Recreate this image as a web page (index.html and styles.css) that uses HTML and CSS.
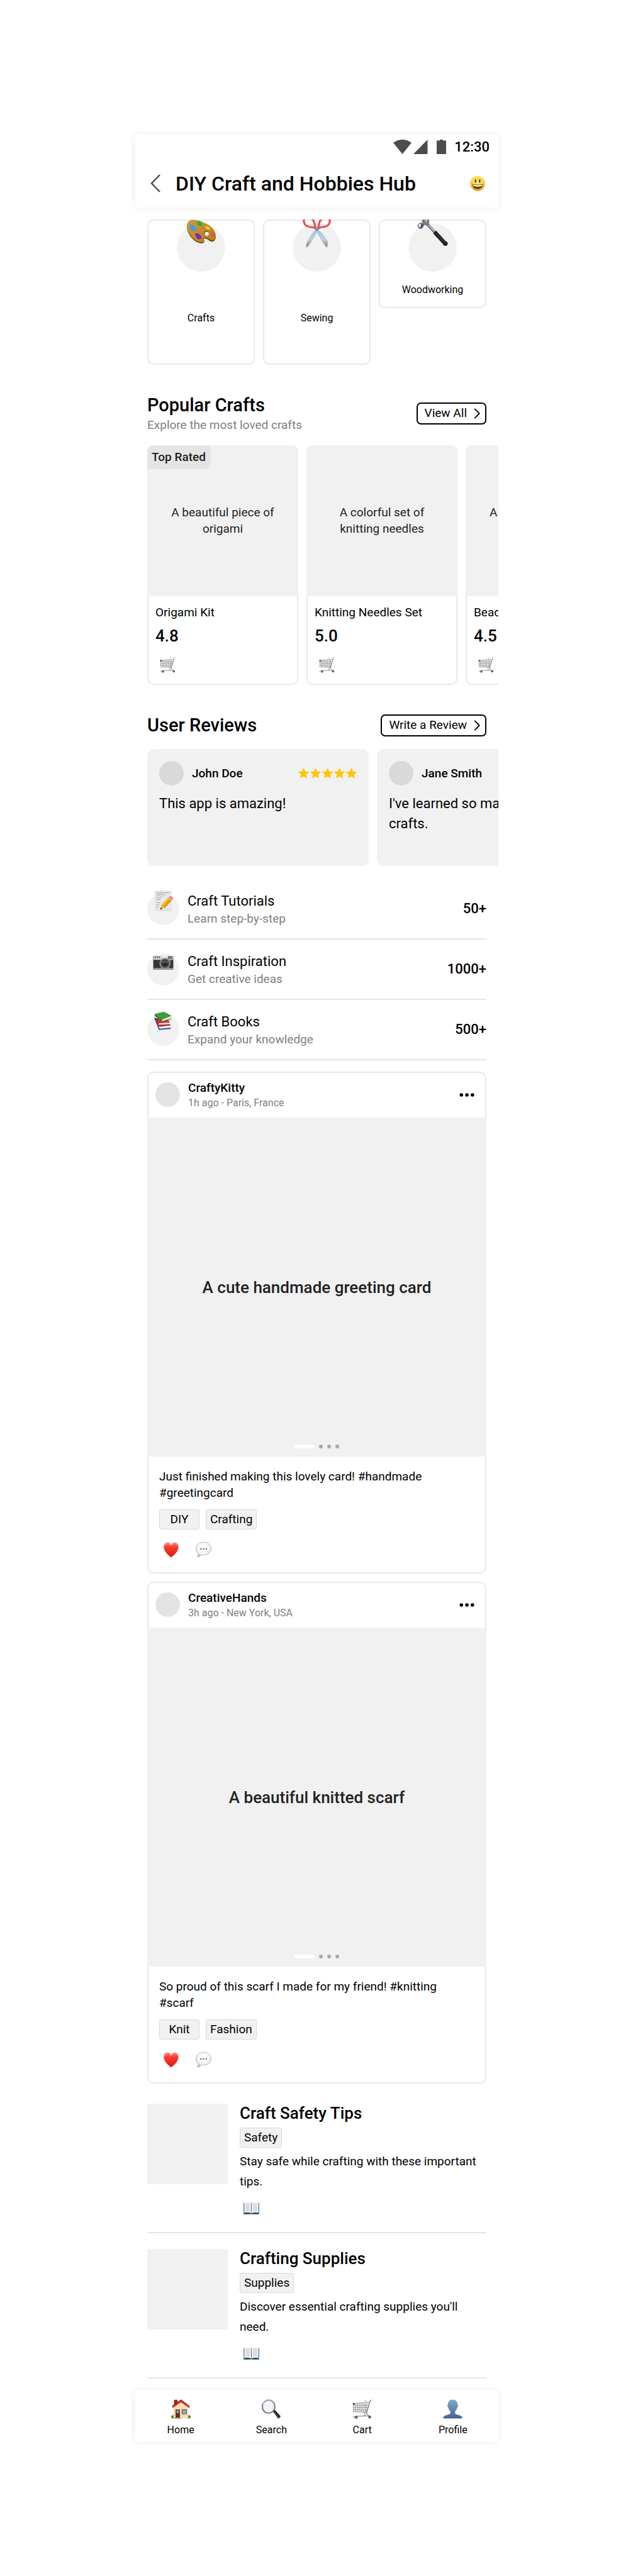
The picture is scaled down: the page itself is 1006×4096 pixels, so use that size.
FILE: index.html
```html
<!DOCTYPE html>
<html lang="en">
<head>
<meta charset="utf-8">
<meta name="viewport" content="width=device-width, initial-scale=1">
<title>DIY Craft and Hobbies Hub</title>
<link rel="stylesheet" href="styles.css">
</head>
<body>
<svg class="sprite" aria-hidden="true">
  <defs>
    <linearGradient id="steel" x1="0" y1="0" x2="0" y2="1"><stop offset="0" stop-color="#9cc4ea"/><stop offset=".55" stop-color="#c3cfdc"/><stop offset="1" stop-color="#8d7f80"/></linearGradient>
    <linearGradient id="person" x1="0" y1="0" x2="0" y2="1"><stop offset="0" stop-color="#80abcd"/><stop offset="1" stop-color="#43648f"/></linearGradient>
    <linearGradient id="red" x1="0" y1="0" x2="0" y2="1"><stop offset="0" stop-color="#ff6a5e"/><stop offset=".35" stop-color="#fb382c"/><stop offset="1" stop-color="#d81a10"/></linearGradient>
    <linearGradient id="wood" x1="0" y1="0" x2="1" y2="1"><stop offset="0" stop-color="#cf9540"/><stop offset="1" stop-color="#b97b22"/></linearGradient>
    <radialGradient id="face" cx=".5" cy=".4" r=".6"><stop offset="0" stop-color="#fff07a"/><stop offset=".65" stop-color="#ffd23c"/><stop offset="1" stop-color="#f09a15"/></radialGradient>
    <radialGradient id="bubble" cx=".5" cy=".4" r=".6"><stop offset="0" stop-color="#fff"/><stop offset=".7" stop-color="#f3f3f3"/><stop offset="1" stop-color="#b4b4b4"/></radialGradient>
  </defs>
  <symbol id="i-chevron" viewBox="0 0 10 18"><path d="M1 1l8 8-8 8" fill="none" stroke="currentColor" stroke-width="2"/></symbol>
  <symbol id="i-star" viewBox="0 0 24 24"><path d="M12 1.500l3.200 7 7.600.8-5.700 5.200 1.600 7.500-6.700-3.700L5.300 22l1.600-7.500L1.200 9.300l7.600-.8z" fill="#ffc700" stroke="#ffc700" stroke-width="1.500" stroke-linejoin="round"/></symbol>
  <symbol id="i-more" viewBox="0 0 24 6"><g fill="#000"><circle cx="3.200" cy="3" r="2.800"/><circle cx="12" cy="3" r="2.800"/><circle cx="20.800" cy="3" r="2.800"/></g></symbol>
  <symbol id="i-cart" viewBox="0 0 40 40">
    <g fill="none" stroke="#777" stroke-width="1">
      <path d="M39 1l-3 3-7 25" stroke="#666" stroke-width="1.400"/>
      <path d="M2 9l33-3M2 13l32-1M2 17.500l30.500-1M2 21.500l29 .5M2 25.500l28.500 1M26 1v4"/>
      <path d="M2 8v18M6 8.500v17.500M10 8v18M14 7.800v18M18 7.500v18.500M22 7.200v19M26 7v19.500M30 6.500L28 26"/>
      <path d="M23 27q5 3 2 8M1 37l4-2 29-1q-5-4-6-7" stroke-width="1.300"/>
    </g>
    <path d="M1 8h4v3H1z" fill="#1d3d58"/>
    <circle cx="8" cy="37" r="3" fill="#5b5152"/><circle cx="35.500" cy="36.500" r="3" fill="#5b5152"/>
    <circle cx="8" cy="37" r="1" fill="#b5aaaa"/><circle cx="35.500" cy="36.500" r="1" fill="#b5aaaa"/>
  </symbol>
  <symbol id="i-heart" viewBox="0 0 30 31"><path d="M15 30.500C10 26 .5 19 .5 9.500C.5 4 4 .8 8 .8c3.500 0 6 2 7 5.200C16 2.800 18.500.8 22 .8c4 0 7.500 3.200 7.500 8.700C29.500 19 20 26 15 30.500z" fill="url(#red)"/><path d="M3 7q1-4 5-4t6 4" fill="none" stroke="#ff9f96" stroke-width="1.500"/><path d="M17 7q1-4 5-4t5 3" fill="none" stroke="#ff9f96" stroke-width="1.500"/></symbol>
  <symbol id="i-bubble" viewBox="0 0 32 32"><path d="M16 .8c9 0 15.300 5.600 15.300 13.200S25 27 16 27c-1.500 0-3-.2-4.500-.5C9.500 29.500 6.500 31 3 31c1.500-1.500 2.500-4 2.300-6.800C2.400 21.700.7 18.200.7 14C.7 6.400 7 .8 16 .8z" fill="url(#bubble)" stroke="#a8a8a8" stroke-width=".9"/><g fill="#555"><circle cx="10.500" cy="14.500" r="1.500"/><circle cx="16" cy="14.500" r="1.500"/><circle cx="21.500" cy="14.500" r="1.500"/></g></symbol>
  <symbol id="i-book" viewBox="0 0 30 24"><path d="M0 2h30v22H18l-3-1-3 1H0z" fill="#3c84ad"/><path d="M1.500 1Q9-.5 15 1.500Q21-.5 28.500 1v20.500Q21 20 15 22.500Q9 20 1.500 21.500z" fill="#f0f0f4"/><path d="M1.500 21Q9 19 15 22q6-3 13.500-1v2H1.500z" fill="#3c4650"/><path d="M15 1.500v21" stroke="#777" stroke-width="1.200"/><path d="M4 4.500h8M4 7.500h8M4 10.500h8M4 13.500h8M4 16.500h8M18 4.500h8M18 7.500h8M18 10.500h8M18 13.500h8M18 16.500h8" stroke="#b3b3ba" stroke-width="1"/></symbol>
</svg>

<div class="phone">
  <header class="top">
    <div class="status">
      <svg class="status-icons" viewBox="0 0 84 23" aria-hidden="true"><g fill="#4d4d4d"><path d="M0 5Q14.500-5 29 5L14.500 23z"/><path d="M32 23L54.500 0v23z"/><path d="M69 1.500h5V0h5v1.500h5V23H69z"/></g></svg>
      <span>12:30</span>
    </div>
    <div class="appbar">
      <button class="back" aria-label="Back"><svg viewBox="0 0 16 29"><path d="M15 1L2 14.500 15 28" fill="none" stroke="#4d4d4d" stroke-width="2.500"/></svg></button>
      <h1>DIY Craft and Hobbies Hub</h1>
      <svg class="face" viewBox="0 0 30 30" aria-hidden="true"><circle cx="15" cy="15" r="14.700" fill="url(#face)"/><g fill="#6b4410"><ellipse cx="11" cy="9.800" rx="1.800" ry="3.600"/><ellipse cx="19" cy="9.800" rx="1.800" ry="3.600"/><path d="M4.500 15.500Q15 18.500 25.500 15.500Q25 26 15 26T4.500 15.500z"/></g><path d="M6 17q9 2.500 18 0l-.8 2.800q-8.200 2-16.400 0z" fill="#fff"/></svg>
    </div>
  </header>

  <main>
    <section class="categories">
      <a class="category" href="#crafts">
        <svg viewBox="0 -8 96 104" aria-hidden="true"><circle cx="48" cy="48" r="48" fill="#f1f1f1"/>
          <path d="M29-6C40-8 64 2 73 14C79 23 79 33 72 36C66 38 60 29 55 30C51 32 58 37 52 39C43 42 27 31 22 17C18 6 20-4 29-6z" fill="#75460f"/>
          <path d="M29-7C40-9 64 0 73 12C79 21 79 31 72 33C66 35 60 26 55 28C50 30 58 35 52 37C43 40 27 29 22 15C18 4 20-5 29-7z" fill="url(#wood)"/>
          <circle cx="59" cy="19.500" r="4.800" fill="#7a4b12"/><circle cx="59.500" cy="20.500" r="4" fill="#f1f1f1"/>
          <path d="M26 3q3-3 7 1t6 7-3 4-8-4-2-8z" fill="#36a3dc"/><path d="M40-4q5-2 8 1t2 6-6 1-4-7z" fill="#26b826"/><path d="M56 5q4-1 8 2t1 5-6-1-3-6z" fill="#f4c919"/><path d="M68 18q4 0 7 5t0 5-5-3-2-7z" fill="#ef4c3c"/><path d="M36 20q4-2 8 1t5 6-3 4-6-1-4-10z" fill="#7d2bb4"/>
        </svg>
        <span>Crafts</span>
      </a>
      <a class="category" href="#sewing">
        <svg viewBox="0 -8 96 104" aria-hidden="true"><circle cx="48" cy="48" r="48" fill="#f1f1f1"/>
          <path d="M50 11C59 20 68 30 70 37Q70 45 68 48C61 40 52 26 47 15z" fill="url(#steel)"/>
          <path d="M46 11C37 20 29 34 27 41Q26 46 28 48C36 40 44 26 50 15z" fill="url(#steel)"/>
          <g fill="none" stroke="#e84f56" stroke-width="4"><path d="M46 10Q44 5 43.500 1Q41-12 30-12Q22-11 22-5Q23 6 35 7Q41 7 46 10z"/><path d="M50 10Q52 5 52.500 1Q55-12 66-12Q74-11 74-5Q73 6 61 7Q55 7 50 10z"/></g>
          <circle cx="48.500" cy="11.500" r="3.400" fill="#72859a"/><path d="M46 9l5 5" stroke="#d7e2ec" stroke-width="1"/>
        </svg>
        <span>Sewing</span>
      </a>
      <a class="category short" href="#woodworking">
        <svg viewBox="0 -8 96 104" aria-hidden="true"><circle cx="48" cy="48" r="48" fill="#f1f1f1"/>
          <path d="M39 3l14 15" stroke="#64686f" stroke-width="5.500"/><path d="M40 3l12 13" stroke="#c6d0de" stroke-width="2"/>
          <path d="M52 17l22 24" stroke="#1e1f20" stroke-width="8"/><circle cx="73.500" cy="40" r="4.600" fill="#1e1f20"/><path d="M55 19l18 20" stroke="#444" stroke-width="1.500"/>
          <path d="M27-12L40-12Q42-4 41 3Q37 6 33 3L29 3Q26-2 27-12z" fill="#777c82"/><path d="M30-12h6q2 5 1 11l-4-3z" fill="#a9aeb5"/>
          <path d="M19 1L25-2 31 3 28 9 23 11 18 6z" fill="#4f555c"/><path d="M20 1l5-1-1 8-4-2z" fill="#e6edf4"/>
        </svg>
        <span>Woodworking</span>
      </a>
    </section>

    <section class="block">
      <div class="block-head">
        <div><h2>Popular Crafts</h2><p class="muted">Explore the most loved crafts</p></div>
        <button class="outlined">View All <svg><use href="#i-chevron"/></svg></button>
      </div>
      <div class="scroller">
        <article class="product">
          <div class="product-picture"><span class="ribbon">Top Rated</span><p>A beautiful piece of origami</p></div>
          <div class="product-body"><h3>Origami Kit</h3><strong>4.8</strong><button aria-label="Add to cart"><svg><use href="#i-cart"/></svg></button></div>
        </article>
        <article class="product">
          <div class="product-picture"><p>A colorful set of knitting needles</p></div>
          <div class="product-body"><h3>Knitting Needles Set</h3><strong>5.0</strong><button aria-label="Add to cart"><svg><use href="#i-cart"/></svg></button></div>
        </article>
        <article class="product">
          <div class="product-picture"><p>A variety of colorful beads</p></div>
          <div class="product-body"><h3>Beading Kit</h3><strong>4.5</strong><button aria-label="Add to cart"><svg><use href="#i-cart"/></svg></button></div>
        </article>
      </div>
    </section>

    <section class="block">
      <div class="block-head">
        <h2>User Reviews</h2>
        <button class="outlined">Write a Review <svg><use href="#i-chevron"/></svg></button>
      </div>
      <div class="scroller">
        <article class="review">
          <div class="review-head"><span class="avatar"></span><h3>John Doe</h3>
            <span class="stars" role="img" aria-label="5 stars"><svg><use href="#i-star"/></svg><svg><use href="#i-star"/></svg><svg><use href="#i-star"/></svg><svg><use href="#i-star"/></svg><svg><use href="#i-star"/></svg></span></div>
          <p>This app is amazing!</p>
        </article>
        <article class="review">
          <div class="review-head"><span class="avatar"></span><h3>Jane Smith</h3>
            <span class="stars" role="img" aria-label="5 stars"><svg><use href="#i-star"/></svg><svg><use href="#i-star"/></svg><svg><use href="#i-star"/></svg><svg><use href="#i-star"/></svg><svg><use href="#i-star"/></svg></span></div>
          <p>I've learned so many amazing crafts.</p>
        </article>
      </div>
    </section>

    <ul class="links">
      <li>
        <svg viewBox="0 0 64 64" aria-hidden="true"><circle cx="32" cy="32" r="32" fill="#f1f1f1"/><path d="M15-5h34v40H15z" fill="#e7e7e7"/><path d="M15 34.500h34" stroke="#cfcfcf"/><path d="M18 0q2-2 4 0t4 0 4-1 4 1 4-1 6 1M18 4q2-2 4 0t3 0 4-1 5 1M18 9q2-2 4 0t4 0 4-1M18 13q2-1 4 0t4 0M18 19q2-2 4 0t4 0M18 24q2-2 4 0t2 0M18 29q2-2 4 0" fill="none" stroke="#8c8c8c"/><path d="M26 33l2-9L42 9l7 6-14 15z" fill="#f5b919"/><path d="M31 28L45 12l3 3-14 15z" fill="#e39a12"/><path d="M26 33l2-9 7 6z" fill="#e8bd87"/><path d="M26 33l1-4 3 2z" fill="#222"/><path d="M42 9l2-2 7 6-2 2z" fill="#b9bec3"/><path d="M43.500 7.500Q47 5 50 8t0 5.500z" fill="#ef7f88"/></svg>
        <div><h3>Craft Tutorials</h3><p class="muted">Learn step-by-step</p></div><strong>50+</strong>
      </li>
      <li>
        <svg viewBox="0 0 64 64" aria-hidden="true"><circle cx="32" cy="32" r="32" fill="#f1f1f1"/><path d="M12 5h40v27H12z" fill="#333436"/><path d="M13 5h38l1 8H12z" fill="#c9cbcc"/><path d="M16 6v3M20 6v3M24 6v3" stroke="#555" stroke-width="2"/><path d="M29 5.500h10v3H29z" fill="#f3f2d6"/><path d="M42 6h7v5h-7z" fill="#887e78" stroke="#555"/><path d="M12 29h40v3H12z" fill="#8f9193"/><circle cx="35.500" cy="20" r="11" fill="#9b9da0"/><circle cx="35.500" cy="20" r="9.300" fill="#57595c"/><circle cx="35.500" cy="20" r="6.500" fill="#2a2b2d"/><path d="M30 19q5-5 11 0" stroke="#85888c" fill="none" stroke-width="1.500"/><path d="M44.500 12h3v2h-3z" fill="#ffc928"/></svg>
        <div><h3>Craft Inspiration</h3><p class="muted">Get creative ideas</p></div><strong>1000+</strong>
      </li>
      <li>
        <svg viewBox="0 0 64 64" aria-hidden="true"><circle cx="32" cy="32" r="32" fill="#f1f1f1"/>
          <path d="M15 8L40 14 47 23 24 26z" fill="#2f55ae"/><path d="M24 26l23-2v5l-21 2z" fill="#ebe8e4"/><path d="M15 8l9 23 23-2" fill="none" stroke="#27479c" stroke-width="2.200"/>
          <path d="M19 9L40 10 45 17 23 20z" fill="#e52d22"/><path d="M22 18l23-2v6l-22 1z" fill="#f2efeb"/><path d="M19 9l3 14 23-1" fill="none" stroke="#c81c14" stroke-width="2.400"/><path d="M22 17.500l22-1.500" stroke="#e52d22" stroke-width="3"/>
          <path d="M15 0L33-4 49 4 29 12z" fill="#3f9d3b"/><path d="M29 12l20-8-1 6-18 6z" fill="#eceae6"/><path d="M15 0v4l14 12q-2-2 0-4z" fill="#2b7a2b"/><path d="M29 15.500l19-5.500" stroke="#2b7a2b" stroke-width="1.500"/></svg>
        <div><h3>Craft Books</h3><p class="muted">Expand your knowledge</p></div><strong>500+</strong>
      </li>
    </ul>

    <section class="posts">
      <article class="post">
        <div class="post-head"><span class="avatar"></span><div><h3>CraftyKitty</h3><p class="meta">1h ago - Paris, France</p></div><button aria-label="More"><svg><use href="#i-more"/></svg></button></div>
        <div class="post-picture"><p>A cute handmade greeting card</p><div class="pager"><i class="on"></i><i></i><i></i><i></i></div></div>
        <div class="post-body">
          <p>Just finished making this lovely card! #handmade #greetingcard</p>
          <div class="tags"><span class="tag">DIY</span><span class="tag">Crafting</span></div>
          <div class="actions"><button aria-label="Like"><svg class="heart"><use href="#i-heart"/></svg></button><button aria-label="Comment"><svg><use href="#i-bubble"/></svg></button></div>
        </div>
      </article>
      <article class="post">
        <div class="post-head"><span class="avatar"></span><div><h3>CreativeHands</h3><p class="meta">3h ago - New York, USA</p></div><button aria-label="More"><svg><use href="#i-more"/></svg></button></div>
        <div class="post-picture"><p>A beautiful knitted scarf</p><div class="pager"><i class="on"></i><i></i><i></i><i></i></div></div>
        <div class="post-body">
          <p>So proud of this scarf I made for my friend! #knitting #scarf</p>
          <div class="tags"><span class="tag">Knit</span><span class="tag">Fashion</span></div>
          <div class="actions"><button aria-label="Like"><svg class="heart"><use href="#i-heart"/></svg></button><button aria-label="Comment"><svg><use href="#i-bubble"/></svg></button></div>
        </div>
      </article>
    </section>

    <section class="guides">
      <article class="guide">
        <div class="thumb"></div>
        <div class="guide-body"><h2>Craft Safety Tips</h2><span class="tag">Safety</span><p>Stay safe while crafting with these important tips.</p><button aria-label="Read"><svg><use href="#i-book"/></svg></button></div>
      </article>
      <article class="guide">
        <div class="thumb"></div>
        <div class="guide-body"><h2>Crafting Supplies</h2><span class="tag">Supplies</span><p>Discover essential crafting supplies you'll need.</p><button aria-label="Read"><svg><use href="#i-book"/></svg></button></div>
      </article>
    </section>
  </main>

  <nav class="tabs">
    <a href="#home"><svg viewBox="0 0 40 40" aria-hidden="true"><ellipse cx="4" cy="36" rx="4" ry="3.500" fill="#4a8a22"/><ellipse cx="36" cy="36" rx="4" ry="3.500" fill="#4a8a22"/><path d="M6 1h7v14H6z" fill="#a52019"/><path d="M5 16L20 4l15 12v23H5z" fill="#f6dfb6"/><path d="M5 24h30M5 28h30M5 20h30M5 33h30" stroke="#e8cc9c" stroke-width=".7"/><path d="M20 1l18 14-1 3L20 6 3 18l-1-3z" fill="#d92c20"/><path d="M2 14L20 1l18 13" fill="none" stroke="#333" stroke-width="1.200"/><path d="M9 21h9v18H9z" fill="#6c2f18"/><path d="M11 23h5v5h-5z" fill="#6db3e2"/><path d="M22.500 21.500h9v8.500h-9z" fill="#6db3e2" stroke="#8b5a35" stroke-width="1.400"/><path d="M7 37.500h13V40H7z" fill="#a99a8b"/></svg><span>Home</span></a>
    <a href="#search"><svg viewBox="0 0 40 40" aria-hidden="true"><path d="M23 25l4-3 12 13-5 5z" fill="#202528"/><path d="M26 27l9 10" stroke="#66717a" stroke-width="1.200"/><ellipse cx="14" cy="15" rx="13" ry="13.500" fill="#f4f4f4" stroke="#5d646b" stroke-width="2"/><ellipse cx="14" cy="15" rx="11.500" ry="12" fill="none" stroke="#c0c6cc"/><path d="M2 9Q6 1 14 1t11 6" fill="none" stroke="#a8c4e2" stroke-width="2"/></svg><span>Search</span></a>
    <a href="#cart"><svg><use href="#i-cart"/></svg><span>Cart</span></a>
    <a href="#profile"><svg viewBox="0 0 40 40" aria-hidden="true"><path d="M20 .5c6 0 10 4.500 10 10q1.500 2 .8 4t-1.600 2.500q-1 5-4.200 7.500v5Q26 31 33 32.500T39.500 39.500H.5Q0 34 7 32.500T15 29.500v-5q-3.200-2.500-4.200-7.500Q10 16.500 9.200 14.500t.8-4c0-5.500 4-10 10-10z" fill="url(#person)"/></svg><span>Profile</span></a>
  </nav>
</div>
</body>
</html>
```
FILE: styles.css
```css
* { box-sizing: border-box; margin: 0; padding: 0; }
body {
  padding: 214px 214px 214px 215px;
  background: #fff;
  color: #000;
  font: 400 19px/26px Roboto, "Liberation Sans", sans-serif;
}
button { border: 0; background: none; font: inherit; color: inherit; display: flex; align-items: center; cursor: pointer; }
a { color: inherit; text-decoration: none; }
h1, h2, h3, strong { font-weight: 500; }
ul { list-style: none; }
svg { display: block; flex: none; }
.sprite { position: absolute; width: 0; height: 0; }
.muted { color: #808080; }

.top { height: 116px; box-shadow: 0 0 14px rgba(0, 0, 0, .08); background: #fff; }
.status { display: flex; justify-content: flex-end; align-items: center; gap: 13px; height: 39px; padding-right: 14px; font-size: 22px; font-weight: 500; }
.status-icons { width: 84px; height: 23px; }
.appbar { display: flex; align-items: center; height: 77px; padding: 0 21px 0 24px; }
.back svg { width: 16px; height: 29px; }
h1 { flex: 1; margin-left: 24px; font-size: 32px; line-height: 38px; }
.face { width: 24px; height: 24px; }

main { padding: 19px; }
.categories { display: grid; grid-template-columns: repeat(3, 1fr); gap: 13px; align-items: start; }
.category { display: flex; flex-direction: column; align-items: center; justify-content: space-between; height: 231px; padding-bottom: 64px; border-radius: 10px; box-shadow: inset 0 0 0 2px #e8e8e8; font-size: 16px; line-height: 20px; }
.category.short { height: 141px; padding-bottom: 19px; }
.category svg { width: 77px; height: 83px; }

.block { margin-top: 45px; }
.block-head { display: flex; align-items: center; justify-content: space-between; margin-bottom: 19px; }
h2 { font-size: 29px; line-height: 38px; }
.outlined { height: 35px; padding: 0 8px 0 11px; gap: 11px; border: 2px solid #000; border-radius: 7px; }
.outlined svg { width: 10px; height: 17px; }
.scroller { display: flex; gap: 13px; margin-right: -19px; overflow: hidden; }

.product { flex: none; width: 240px; border-radius: 10px; overflow: hidden; outline: 2px solid rgba(0, 0, 0, .09); outline-offset: -2px; }
.product-picture { position: relative; display: flex; align-items: center; justify-content: center; aspect-ratio: 1; padding: 0 30px; background: #f1f1f1; color: #222; text-align: center; }
.ribbon { position: absolute; top: 0; left: 0; padding: 6px 8px 6px 7px; background: #e5e5e5; border-bottom-right-radius: 10px; font-weight: 500; }
.product-body { padding: 13px 13px 19px; }
.product h3 { font-weight: 400; font-size: 19px; line-height: 26px; }
.product strong { display: block; margin-top: 5px; font-size: 26px; line-height: 38px; }
.product button { margin: 14px 0 0 7px; }
.product button svg { width: 25px; height: 26px; }

.review { flex: none; width: 352px; height: 186px; padding: 19px; border-radius: 10px; background: #f1f1f1; }
.review-head { display: flex; align-items: center; }
.avatar { flex: none; width: 39px; height: 39px; border-radius: 50%; background: #e3e3e3; }
.review .avatar { background: #d9d9d9; }
h3 { font-size: 19px; line-height: 26px; }
.review h3 { flex: 1; margin-left: 13px; }
.stars { display: flex; gap: 2px; }
.stars svg { width: 17px; height: 17px; }
.review p { margin-top: 13px; font-size: 22px; line-height: 32px; }

.links { margin-top: 21px; }
.links li { display: flex; align-items: center; gap: 13px; height: 96px; border-bottom: 2px solid #e5e5e5; }
.links svg { width: 51px; height: 51px; overflow: visible; }
.links div { flex: 1; padding-top: 2px; }
.links h3 { font-weight: 400; font-size: 22px; line-height: 30px; }
.links strong { font-size: 22px; }

.posts { display: grid; gap: 13px; margin-top: 18px; }
.post { border-radius: 10px; overflow: hidden; outline: 2px solid rgba(0, 0, 0, .09); outline-offset: -2px; }
.post-head { display: flex; align-items: center; gap: 13px; height: 73px; padding: 0 19px 0 13px; }
.post-head div { flex: 1; }
.post-head svg { width: 24px; height: 6px; }
.meta { color: #808080; font-size: 16px; line-height: 21px; }
.post-picture { position: relative; display: flex; align-items: center; justify-content: center; aspect-ratio: 1; background: #f1f1f1; color: #222; font-size: 26px; font-weight: 500; }
.pager { position: absolute; left: 0; right: 0; bottom: 13px; display: flex; justify-content: center; gap: 7px; }
.pager i { width: 6px; height: 6px; border-radius: 3px; background: #a8a8a8; }
.pager .on { width: 32px; background: #fff; }
.post-body { padding: 19px 26px 25px 19px; }
.tags { display: flex; gap: 10px; margin-top: 13px; }
.tag { min-width: 64px; height: 32px; padding: 2px 6px; border: 1px solid #d9d9d9; border-radius: 3px; background: #f1f1f1; text-align: center; }
.actions { display: flex; gap: 27px; margin: 19px 0 0 7px; }
.actions svg { width: 25px; height: 26px; }
.actions .heart { width: 24px; height: 25px; }

.guides { margin-top: 7px; }
.guide { display: flex; gap: 19px; padding: 25px 0 28px; border-bottom: 2px solid #e5e5e5; }
.thumb { flex: none; width: 128px; height: 128px; background: #f1f1f1; }
.guide-body { display: flex; flex-direction: column; align-items: flex-start; }
.guide h2 { margin-bottom: 8px; font-size: 26px; line-height: 30px; }
.guide p { margin-top: 6px; line-height: 32px; }
.guide button { margin: 16px 0 0 6px; }
.guide button svg { width: 25px; height: 20px; }

.tabs { display: grid; grid-template-columns: repeat(4, 1fr); padding: 14px 0 9px; background: #fff; box-shadow: 0 0 14px rgba(0, 0, 0, .08); font-size: 16px; line-height: 20px; }
.tabs a { display: flex; flex-direction: column; align-items: center; gap: 8px; }
.tabs svg { width: 31px; height: 31px; }
```
